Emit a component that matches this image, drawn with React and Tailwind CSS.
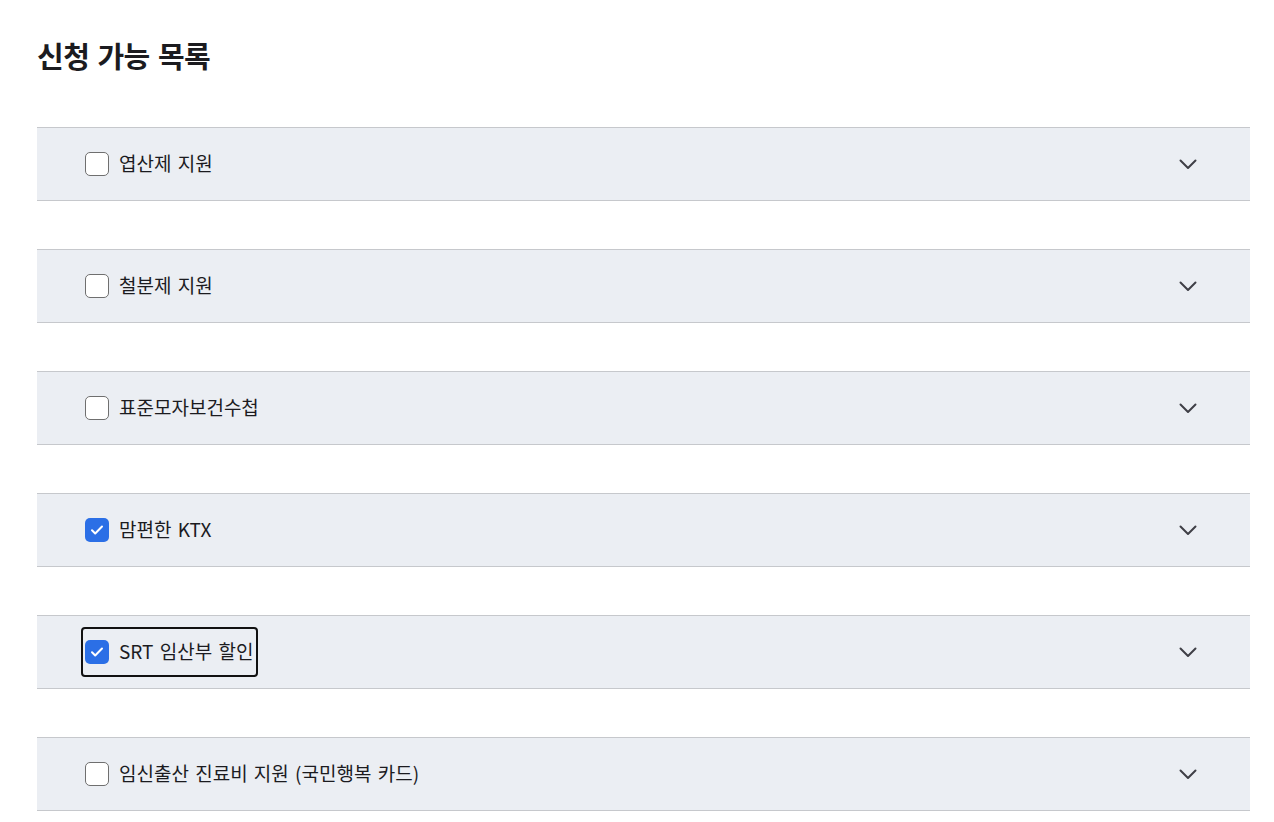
import React, { useState } from 'react';

const items = [
  { id: 'folic', label: '엽산제 지원', checked: false },
  { id: 'iron', label: '철분제 지원', checked: false },
  { id: 'handbook', label: '표준모자보건수첩', checked: false },
  { id: 'ktx', label: '맘편한 KTX', checked: true },
  { id: 'srt', label: 'SRT 임산부 할인', checked: true, focused: true },
  { id: 'card', label: '임신출산 진료비 지원 (국민행복 카드)', checked: false },
];

const Checkbox = ({ checked }) => (
  <span
    className={`flex items-center justify-center w-[24px] h-[24px] rounded-[5px] ${
      checked ? 'bg-[#2b6fe6]' : 'bg-white border border-[#6f6f6f]'
    }`}
  >
    {checked && (
      <svg width="18" height="18" viewBox="0 0 18 18" fill="none">
        <path d="M4 9.3l3.2 3.2 6.8-7" stroke="white" strokeWidth="2" strokeLinecap="round" strokeLinejoin="round" />
      </svg>
    )}
  </span>
);

const Chevron = () => (
  <svg width="20" height="20" viewBox="0 0 20 20" fill="none">
    <path d="M2.5 6.5l7.5 7.5 7.5-7.5" stroke="#3f3f46" strokeWidth="2" strokeLinecap="round" strokeLinejoin="round" />
  </svg>
);

const App = () => {
  const [list, setList] = useState(items);

  const toggle = (id) => {
    setList(list.map((it) => (it.id === id ? { ...it, checked: !it.checked } : it)));
  };

  return (
    <div className="min-h-screen bg-white font-['Noto_Sans_CJK_KR','Noto_Sans',sans-serif] text-[#1b1b1f]">
      <div className="ml-[37px] w-[1213px] pt-[35px]">
        <h1 className="text-[29px] leading-[40px] font-bold tracking-[-0.5px] [word-spacing:2px]">신청 가능 목록</h1>

        <div className="mt-[52px] flex flex-col gap-[48px]">
          {list.map((it) => (
            <div
              key={it.id}
              className="h-[74px] flex items-center justify-between bg-[#ebeef3] border-y border-[#c6c8cc] pl-[44px] pr-[52px]"
            >
              <label
                onClick={() => toggle(it.id)}
                className={`inline-flex items-center gap-[10px] h-[50px] pl-[2px] pr-[3px] border-2 rounded-[4px] cursor-pointer ${
                  it.focused ? 'border-[#111111]' : 'border-transparent'
                }`}
              >
                <Checkbox checked={it.checked} />
                <span className="text-[19px] leading-none -mt-[3px] [word-spacing:2px]">{it.label}</span>
              </label>
              <Chevron />
            </div>
          ))}
        </div>
      </div>
    </div>
  );
};

export default App;
